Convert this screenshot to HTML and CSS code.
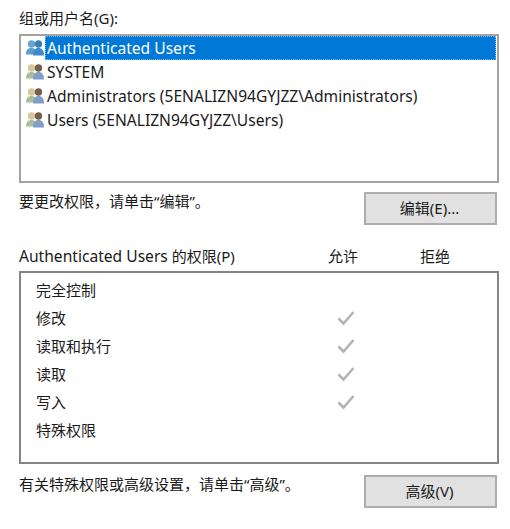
FILE: index.html
```html
<!DOCTYPE html>
<html lang="zh-CN">
<head>
    <meta charset="UTF-8">
    <meta name="viewport" content="width=device-width, initial-scale=1.0">
    <title>权限</title>
    <link rel="stylesheet" href="styles.css">
</head>
<body>
    <svg class="defs" width="0" height="0">
        <symbol id="users-grey" viewBox="0 0 18 16">
            <circle cx="5.500" cy="4" r="3.700" fill="#d8c79a"/>
            <path d="M0 14.500C0 10 2 8 5.500 8S10 10 10 14.500z" fill="#a8c09a"/>
            <circle cx="12.500" cy="4" r="3.700" fill="#75604c"/>
            <path d="M7 15.500C7 10.500 9 8 12.500 8S18 10.500 18 15.500z" fill="#7f9fc8"/>
        </symbol>
        <symbol id="users-blue" viewBox="0 0 18 16">
            <circle cx="5.500" cy="4" r="3.700" fill="#6aa5d2"/>
            <path d="M0 14.500C0 10 2 8 5.500 8S10 10 10 14.500z" fill="#5a9ccc"/>
            <circle cx="12.500" cy="4" r="3.700" fill="#3a80bb"/>
            <path d="M7 15.500C7 10.500 9 8 12.500 8S18 10.500 18 15.500z" fill="#3f89c8"/>
        </symbol>
        <symbol id="check" viewBox="0 0 18 16">
            <path d="M1.500 8.500 6.500 13.500 16.500 2" fill="none" stroke="#b4b4b4" stroke-width="2.600"/>
        </symbol>
    </svg>

    <div class="page">
        <div class="group-label">组或用户名(G):</div>
        <div class="user-list">
            <div class="user-row">
                <svg class="user-icon"><use href="#users-blue"/></svg>
                <span class="user-name selected">Authenticated Users</span>
            </div>
            <div class="user-row">
                <svg class="user-icon"><use href="#users-grey"/></svg>
                <span class="user-name">SYSTEM</span>
            </div>
            <div class="user-row">
                <svg class="user-icon"><use href="#users-grey"/></svg>
                <span class="user-name">Administrators (5ENALIZN94GYJZZ\Administrators)</span>
            </div>
            <div class="user-row">
                <svg class="user-icon"><use href="#users-grey"/></svg>
                <span class="user-name">Users (5ENALIZN94GYJZZ\Users)</span>
            </div>
        </div>

        <div class="action-row edit-row">
            <span class="hint">要更改权限，请单击“编辑”。</span>
            <button type="button"><span class="btn-label">编辑(E)...</span></button>
        </div>

        <div class="perm-head">
            <span class="perm-title"><span class="latin">Authenticated Users</span> 的权限(P)</span>
            <span class="col">允许</span>
            <span class="col">拒绝</span>
        </div>
        <div class="perm-list">
            <div class="perm-row"><span class="perm-name">完全控制</span></div>
            <div class="perm-row"><span class="perm-name">修改</span><svg class="check"><use href="#check"/></svg></div>
            <div class="perm-row"><span class="perm-name">读取和执行</span><svg class="check"><use href="#check"/></svg></div>
            <div class="perm-row"><span class="perm-name">读取</span><svg class="check"><use href="#check"/></svg></div>
            <div class="perm-row"><span class="perm-name">写入</span><svg class="check"><use href="#check"/></svg></div>
            <div class="perm-row"><span class="perm-name">特殊权限</span></div>
        </div>

        <div class="action-row advanced-row">
            <span class="hint">有关特殊权限或高级设置，请单击“高级”。</span>
            <button type="button"><span class="btn-label">高级(V)</span></button>
        </div>
    </div>
</body>
</html>
```

FILE: styles.css
```css
body { margin: 0; background: #fff; color: #1a1a1a; font-family: "Noto Sans", "Noto Sans CJK SC", sans-serif; font-size: 15px; line-height: 20px; }
.defs { display: block; }
.page { padding: 8px 11px 0 19px; }
.group-label { height: 26px; }

.user-list { box-sizing: border-box; width: 480px; height: 149px; border: 2px solid #a2a2a2; padding: 0 1px; }
.user-row { display: flex; align-items: center; height: 24px; padding-left: 4px; }
.user-icon { width: 18px; height: 16px; margin-right: 1px; flex: none; }
.user-name { flex: 1; height: 24px; line-height: 24px; padding-left: 2px; font-size: 15.6px; }
.selected { background: #0078d7; color: #fff; outline: 1px dotted #7fb8e8; outline-offset: -1px; }

.action-row { display: flex; justify-content: space-between; align-items: flex-start; width: 478px; }
.edit-row { margin-top: 9px; height: 33px; }
.advanced-row { margin-top: 11px; height: 33px; }
.hint { margin-top: -1px; }
button { box-sizing: border-box; width: 133px; height: 33px; background: #e1e1e1; border: 2px solid #adadad; color: #1a1a1a; font: inherit; padding: 0 2px 2px 0; }

.perm-head { display: flex; align-items: center; height: 20px; margin-top: 21px; }
.perm-title { flex: none; width: 309px; }
.latin { font-size: 15.6px; }
.col { flex: none; width: 92px; }
.col:last-child { width: 79px; }

.perm-list { box-sizing: border-box; width: 480px; height: 193px; margin-top: 5px; border: 2px solid #858585; padding-top: 3px; }
.perm-row { display: flex; align-items: center; height: 28px; padding-left: 15px; }
.perm-name { width: 301px; }
.check { width: 18px; height: 16px; }
```
